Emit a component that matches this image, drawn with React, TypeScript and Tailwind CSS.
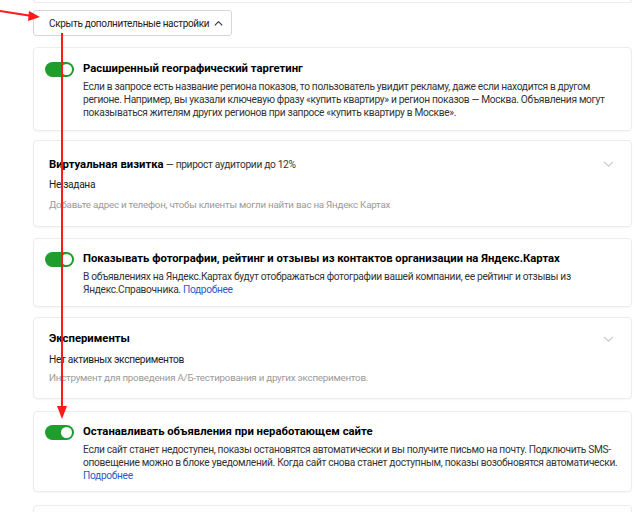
import type { ReactNode } from 'react'

const font = { fontFamily: '"Roboto", "Liberation Sans", Arial, sans-serif' }

function Toggle() {
  return (
    <div className="relative mt-[1px] h-[15px] w-[29px] shrink-0 rounded-full bg-[#1f9d2d]">
      <div className="absolute right-[2px] top-[2px] h-[11px] w-[11px] rounded-full bg-white" />
    </div>
  )
}

function Chevron({ up, small }: { up?: boolean; small?: boolean }) {
  return (
    <svg
      width={small ? 9 : 11}
      height={small ? 5 : 6}
      viewBox="0 0 11 6"
      fill="none"
      className={up ? 'rotate-180' : ''}
    >
      <path d="M1 0.8l4.5 4.4 4.5-4.4" stroke="currentColor" strokeWidth={small ? 1.4 : 1.1} />
    </svg>
  )
}

function Card({ children, className = '' }: { children?: ReactNode; className?: string }) {
  return (
    <div className={`rounded-[4px] border border-[#ececec] bg-white shadow-[0_1px_2px_rgba(0,0,0,0.04)] ${className}`}>
      {children}
    </div>
  )
}

function ToggleCard({ title, children, className = '' }: { title: string; children: ReactNode; className?: string }) {
  return (
    <Card className={`flex gap-[9px] pl-[11px] pr-4 ${className}`}>
      <Toggle />
      <div className="flex-1">
        <div className="whitespace-nowrap text-[11.3px] font-bold leading-[16px] text-black">{title}</div>
        <div className="mt-[3px] whitespace-nowrap text-[10.2px] leading-[13px] tracking-[-0.32px] text-[#333]">
          {children}
        </div>
      </div>
    </Card>
  )
}

function Link({ children }: { children: ReactNode }) {
  return <span className="text-[#2a5cc9]">{children}</span>
}

export default function App() {
  return (
    <div className="relative h-[512px] w-[634px] overflow-hidden bg-white" style={font}>
      <div className="flex flex-col pl-[33px] pr-[2px]">
        <div className="h-[3px] rounded-b-[4px] border-x border-b border-[#ececec]" />

        <button className="mt-[7px] flex h-[26px] w-[199px] items-center gap-[5px] self-start whitespace-nowrap rounded-[3px] border border-[#d6d6d6] bg-white pl-[15px] text-[10px] tracking-[-0.32px] text-[#222]">
          Скрыть дополнительные настройки
          <span className="text-[#333]">
            <Chevron up small />
          </span>
        </button>

        <ToggleCard title="Расширенный географический таргетинг" className="mt-[11px] h-[84px] pt-[13px]">
          Если в запросе есть название региона показов, то пользователь увидит рекламу, даже если находится в другом
          <br />
          регионе. Например, вы указали ключевую фразу «купить квартиру» и регион показов — Москва. Объявления могут
          <br />
          показываться жителям других регионов при запросе «купить квартиру в Москве».
        </ToggleCard>

        <Card className="mt-[9px] h-[87px] pl-[15px] pr-[17px] pt-[14px]">
          <div className="flex items-center justify-between">
            <div className="whitespace-nowrap leading-[16px] text-black">
              <span className="text-[11.3px] font-bold">Виртуальная визитка</span>
              <span className="text-[10.2px] tracking-[-0.32px] text-[#333]"> — прирост аудитории до 12%</span>
            </div>
            <span className="text-[#c8c8c8]">
              <Chevron />
            </span>
          </div>
          <div className="mt-[4px] text-[10.2px] leading-[16px] tracking-[-0.32px] text-[#222]">Не задана</div>
          <div className="mt-[4px] text-[9.8px] leading-[16px] tracking-[-0.25px] text-[#9a9a9a]">
            Добавьте адрес и телефон, чтобы клиенты могли найти вас на Яндекс Картах
          </div>
        </Card>

        <ToggleCard
          title="Показывать фотографии, рейтинг и отзывы из контактов организации на Яндекс.Картах"
          className="mt-[11px] h-[69px] pt-[12px]"
        >
          В объявлениях на Яндекс.Картах будут отображаться фотографии вашей компании, ее рейтинг и отзывы из
          <br />
          Яндекс.Справочника. <Link>Подробнее</Link>
        </ToggleCard>

        <Card className="mt-[10px] h-[82px] pl-[15px] pr-[17px] pt-[13px]">
          <div className="flex items-center justify-between">
            <div className="text-[11.3px] font-bold leading-[16px] text-black">Эксперименты</div>
            <span className="text-[#c8c8c8]">
              <Chevron />
            </span>
          </div>
          <div className="mt-[5px] text-[10.2px] leading-[16px] tracking-[-0.32px] text-[#222]">
            Нет активных экспериментов
          </div>
          <div className="mt-[2px] text-[9.8px] leading-[16px] tracking-[-0.25px] text-[#9a9a9a]">
            Инструмент для проведения А/Б-тестирования и других экспериментов.
          </div>
        </Card>

        <ToggleCard title="Останавливать объявления при неработающем сайте" className="mt-[12px] h-[81px] pt-[12px]">
          Если сайт станет недоступен, показы остановятся автоматически и вы получите письмо на почту. Подключить SMS-
          <br />
          оповещение можно в блоке уведомлений. Когда сайт снова станет доступным, показы возобновятся автоматически.
          <br />
          <Link>Подробнее</Link>
        </ToggleCard>

        <Card className="mt-[13px] h-[20px]" />
      </div>

      <svg className="pointer-events-none absolute left-0 top-0" width="634" height="512">
        <line x1="0" y1="11" x2="32" y2="16" stroke="#ff1a1a" strokeWidth="2" />
        <polygon points="40,17 29,11 28,21" fill="#ff1a1a" />
        <line x1="62" y1="33" x2="62" y2="408" stroke="#ff1a1a" strokeWidth="2" />
        <polygon points="62,419 57,406 67,406" fill="#ff1a1a" />
      </svg>
    </div>
  )
}
